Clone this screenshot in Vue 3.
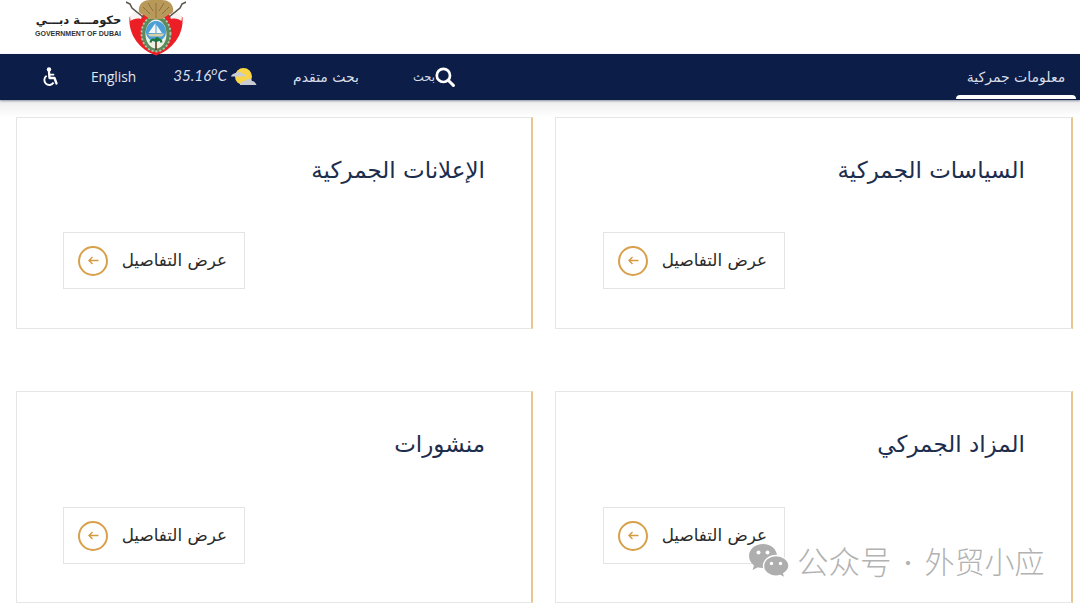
<script setup>
const cards = [
  { id: 1, title: 'السياسات الجمركية' },
  { id: 2, title: 'الإعلانات الجمركية' },
  { id: 3, title: 'المزاد الجمركي' },
  { id: 4, title: 'منشورات' }
]
</script>

<template>
  <div class="page">
    <header class="top">
      <div class="brand">
        <div class="brand-text">
          <div class="brand-ar">حكومـــة دبـــي</div>
          <div class="brand-en">GOVERNMENT OF DUBAI</div>
        </div>
        <svg class="emblem" width="60" height="56" viewBox="0 0 60 56">
          <path d="M3.500 17 C2 35 14 50 30 55.500 C46 50 58 35 56.500 17 L42 12 L18 12 Z" fill="#ec1f27"/>
          <path d="M4 17 L9 11 L17 14 L15 19 C11 18 7 19 4.500 21 Z M56 17 L51 11 L43 14 L45 19 C49 18 53 19 55.500 21 Z" fill="#f6f3f0"/>
          <path d="M0 2 L4 4 L6 8 L17 17 M60 2 L56 4 L54 8 L43 17" stroke="#5a544c" stroke-width="1.600" fill="none"/>
          <ellipse cx="30" cy="33.500" rx="15" ry="18.500" fill="#5b8a5c"/>
          <ellipse cx="30" cy="33.500" rx="14.500" ry="18" fill="none" stroke="#b3c4a8" stroke-width="1.800" stroke-dasharray="2 2"/>
          <ellipse cx="30" cy="34" rx="10.500" ry="14.500" fill="#eef1e6"/>
          <path d="M20 32 C20 26 24 21 30 21 C36 21 40 26 40 32 C40 37 36 41 30 42 C24 41 20 37 20 32 Z" fill="#4b9ed6"/>
          <path d="M29.500 23 L29.500 33 L22.500 33 Z M30.500 25 L36 33 L30.500 33 Z" fill="#f6f8f8"/>
          <path d="M21.500 34 L38.500 33.500 L36 36.500 L24 36.500 Z" fill="#d8cfa8"/>
          <path d="M30 41 L30 50" stroke="#5c3d1e" stroke-width="1.600"/>
          <path d="M30 41 C27 38.500 25 39.500 24.500 42.500 M30 41 C33 38.500 35 39.500 35.500 42.500 M30 41 C29 38 31 37.500 32 39" stroke="#1c7a3a" stroke-width="2.200" fill="none"/>
          <path d="M13 8 C14 3 18 0 24 0 L36 0 C42 0 46 3 47 8 C48 12 46 14 42 15 L36 19 L24 19 L18 15 C14 14 12 12 13 8 Z" fill="#b8995a"/>
          <path d="M17 7 L24 14 M43 7 L36 14 M22 3 L27 11 M38 3 L33 11 M30 3 L30 18" stroke="#8d7240" stroke-width="1"/>
        </svg>
      </div>
    </header>

    <nav class="nav">
      <a class="nav-item active">معلومات جمركية</a>
      <a class="nav-search">
        <svg width="20" height="20" viewBox="0 0 20 20">
          <circle cx="8.400" cy="8.400" r="6.600" fill="none" stroke="#fff" stroke-width="2.700"/>
          <path d="M13.200 13.200 L18.400 18.400" stroke="#fff" stroke-width="3" stroke-linecap="round"/>
        </svg>
        <span>بحث</span>
      </a>
      <a class="nav-adv">بحث متقدم</a>
      <div class="nav-weather">
        <svg width="27" height="20" viewBox="0 0 27 20">
          <circle cx="13.500" cy="9.500" r="8.500" fill="#f9d648"/>
          <path d="M1 9.500 C2 6.500 5 6.500 6 6 C8 4 11 4.500 12 6.500 C14 6.500 16 7.500 16 9.500 Z" fill="#c9ccd2"/>
          <path d="M10 18 C10 15 13 14 15.500 14 C17 11 21 11 22 14 C24 14 26 16 26.500 18 Z" fill="#c9ccd2"/>
        </svg>
        <span class="temp">35.16<sup>o</sup>C</span>
      </div>
      <a class="nav-lang" lang="en">English</a>
      <svg class="nav-access" width="18" height="20" viewBox="0 0 18 20">
        <circle cx="8" cy="2.400" r="2.200" fill="#fff"/>
        <path d="M8 5 L8.500 11 L13.500 11 L15.500 16.500" fill="none" stroke="#fff" stroke-width="2.300" stroke-linejoin="round" stroke-linecap="round"/>
        <path d="M8 7.600 L12.500 7.600" stroke="#fff" stroke-width="1.800" stroke-linecap="round"/>
        <path d="M5.600 8.800 A5 5 0 1 0 12.600 15.600" fill="none" stroke="#fff" stroke-width="1.900"/>
      </svg>
    </nav>

    <main class="grid">
      <section v-for="card in cards" :key="card.id" class="card">
        <h2 class="card-title">{{ card.title }}</h2>
        <a class="card-btn">
          <span class="btn-label">عرض التفاصيل</span>
          <span class="circle">
            <svg width="11" height="9" viewBox="0 0 11 9">
              <path d="M10.500 4.500 H1 M4.500 1 L1 4.500 L4.500 8" fill="none" stroke="#d39a3f" stroke-width="1.400"/>
            </svg>
          </span>
        </a>
      </section>
    </main>

    <div class="mark">
      <svg width="42" height="36" viewBox="0 0 42 36">
        <path d="M15 1 C7 1 1 6.500 1 13 C1 17 3 20 6 22.500 L4.500 27 L10 24.300 C12 25 13.500 25.200 15.500 25.200 C22 25.200 29 20 29 13 C29 6.500 23 1 15 1 Z" fill="#aeaeae"/>
        <path d="M28 12.500 C21.500 12.500 15.500 17 15.500 23 C15.500 29 21.500 33.300 28 33.300 C29.500 33.300 31 33 32.300 32.500 L37 35 L35.800 30.500 C38.800 28.500 41 26 41 23 C41 17 34.500 12.500 28 12.500 Z" fill="#aeaeae" stroke="#fff" stroke-width="1.400"/>
        <circle cx="10.500" cy="9.500" r="2" fill="#fff"/>
        <circle cx="19.500" cy="9.500" r="2" fill="#fff"/>
        <circle cx="23.500" cy="20.500" r="1.700" fill="#fff"/>
        <circle cx="32.500" cy="20.500" r="1.700" fill="#fff"/>
      </svg>
      <span class="mark-text first">公众号</span>
      <span class="mark-dot">·</span>
      <span class="mark-text">外贸小应</span>
    </div>
  </div>
</template>

<style>
html, body { margin: 0; background: #fff; overflow: hidden; }
</style>

<style scoped>
.page {
  width: 1080px;
  height: 605px;
  position: relative;
  overflow: hidden;
  background: #fff;
  font-family: "DejaVu Sans", "Noto Sans", sans-serif;
}
.top { height: 54px; display: flex; }
.brand { display: flex; align-items: flex-start; margin-left: 35px; position: relative; z-index: 2; }
.brand-text { width: 87px; margin-top: 12px; margin-right: 4px; }
.brand-ar {
  direction: rtl; font-size: 11.500px; line-height: 17px; color: #222; text-align: center; white-space: nowrap; font-weight: 700;
}
.brand-en {
  font-family: "Liberation Sans", sans-serif; font-size: 7px; font-weight: 700; color: #333; line-height: 9px; white-space: nowrap;
}
.emblem { display: block; }
.nav {
  height: 46px;
  background: #0c1e47;
  direction: rtl;
  display: flex;
  align-items: center;
  color: #d9dde6;
  box-shadow: 0 1px 2px rgba(80,90,120,.6);
  position: relative;
}
.nav-item {
  width: 120px; margin-right: 4px; height: 46px; line-height: 46px; text-align: center; font-size: 14px; position: relative; white-space: nowrap;
}
.active::after {
  content: ""; position: absolute; left: 0; right: 0; bottom: 1px; height: 4px; background: #fff; border-radius: 4px 4px 0 0;
}
.nav-search { display: flex; align-items: center; margin-right: 501px; width: 43px; font-size: 11.500px; white-space: nowrap; }
.nav-adv { margin-right: 53px; width: 67px; font-size: 14px; white-space: nowrap; }
.nav-weather { margin-right: 35px; display: flex; align-items: center; }
.temp { direction: ltr; font-family: "Lato", sans-serif; font-style: italic; font-size: 15.200px; margin-top: -4px; margin-right: 3px; }
.temp sup { font-size: 12px; line-height: 0; }
.nav-lang { margin-right: 37px; margin-top: -2px; font-family: "Open Sans", sans-serif; font-size: 13.700px; color: #e4e7ee; }
.nav-access { margin-right: 31px; transform: translateX(-1px); }
.grid {
  direction: rtl;
  display: grid;
  grid-template-columns: 518px 517px;
  grid-template-rows: 212px 212px;
  column-gap: 22px;
  row-gap: 62px;
  padding: 17px 7px 0 16px;
  background: linear-gradient(#ececec 0, #fff 17px) no-repeat;
  background-size: 100% 17px;
}
.card {
  box-sizing: border-box;
  border: 1px solid #e6e6e6;
  border-right: 2px solid #e6c78f;
  background: #fff;
  padding: 36px 46px 0 46px;
  display: flex;
  flex-direction: column;
}
.card:nth-child(odd) { padding-left: 47px; }
.card-title {
  margin: 0; font-size: 23px; font-weight: 400; line-height: 32px; color: #1c2d4d; white-space: nowrap;
}
.card-btn {
  margin-top: 46px;
  align-self: flex-end;
  width: 182px; height: 57px;
  box-sizing: border-box;
  border: 1px solid #e4e4e4;
  display: flex;
  align-items: center;
  justify-content: space-between;
  padding: 0 17px 0 14px;
  font-size: 16.800px;
  color: #2a2a2a;
  white-space: nowrap;
}
.card:nth-child(n+3) .card-btn { margin-top: 47px; }
.btn-label { margin-top: -1px; }
.circle {
  width: 30px; height: 30px; box-sizing: border-box; border: 2px solid #d8a04a; border-radius: 50%;
  display: flex; align-items: center; justify-content: center; flex: none;
}
.mark {
  position: absolute; left: 748px; top: 543px; display: flex; align-items: center; color: #b2b2b2;
  font-family: "Noto Sans CJK SC", sans-serif; font-size: 30px; line-height: 36px; font-weight: 300;
}
.mark svg { margin-right: 7px; }
.mark-text { margin-top: -2px; }
.mark-text.first { font-size: 31.500px; }
.mark-dot { width: 33px; text-align: center; font-size: 22px; }
</style>
